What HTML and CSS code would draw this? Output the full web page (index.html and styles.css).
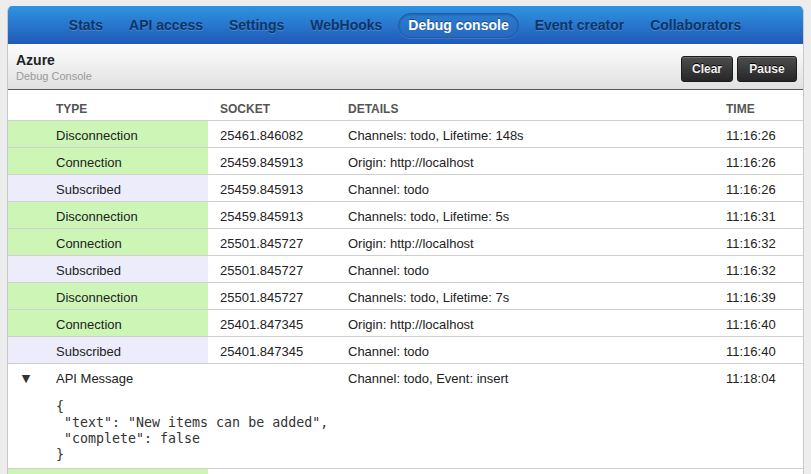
FILE: index.html
```html
<!DOCTYPE html>
<html lang="en">
<head>
<meta charset="utf-8">
<title>Debug console</title>
<link rel="stylesheet" href="styles.css">
</head>
<body>
<div class="panel">
  <nav class="nav">
    <a class="nav-item">Stats</a>
    <a class="nav-item">API access</a>
    <a class="nav-item">Settings</a>
    <a class="nav-item">WebHooks</a>
    <a class="nav-item active">Debug console</a>
    <a class="nav-item">Event creator</a>
    <a class="nav-item">Collaborators</a>
  </nav>
  <header class="head">
    <div class="title">
      <div class="app-name">Azure</div>
      <div class="subtitle">Debug Console</div>
    </div>
    <div class="actions">
      <button class="btn btn-clear">Clear</button>
      <button class="btn btn-pause">Pause</button>
    </div>
  </header>
  <div class="table">
    <div class="row thead">
      <div class="cell arrow"></div>
      <div class="cell">Type</div>
      <div class="cell">Socket</div>
      <div class="cell">Details</div>
      <div class="cell">Time</div>
    </div>
    <div class="row conn">
      <div class="cell arrow"></div><div class="cell type">Disconnection</div>
      <div class="cell">25461.846082</div><div class="cell">Channels: todo, Lifetime: 148s</div><div class="cell">11:16:26</div>
    </div>
    <div class="row conn">
      <div class="cell arrow"></div><div class="cell type">Connection</div>
      <div class="cell">25459.845913</div><div class="cell">Origin: http://localhost</div><div class="cell">11:16:26</div>
    </div>
    <div class="row sub">
      <div class="cell arrow"></div><div class="cell type">Subscribed</div>
      <div class="cell">25459.845913</div><div class="cell">Channel: todo</div><div class="cell">11:16:26</div>
    </div>
    <div class="row conn">
      <div class="cell arrow"></div><div class="cell type">Disconnection</div>
      <div class="cell">25459.845913</div><div class="cell">Channels: todo, Lifetime: 5s</div><div class="cell">11:16:31</div>
    </div>
    <div class="row conn">
      <div class="cell arrow"></div><div class="cell type">Connection</div>
      <div class="cell">25501.845727</div><div class="cell">Origin: http://localhost</div><div class="cell">11:16:32</div>
    </div>
    <div class="row sub">
      <div class="cell arrow"></div><div class="cell type">Subscribed</div>
      <div class="cell">25501.845727</div><div class="cell">Channel: todo</div><div class="cell">11:16:32</div>
    </div>
    <div class="row conn">
      <div class="cell arrow"></div><div class="cell type">Disconnection</div>
      <div class="cell">25501.845727</div><div class="cell">Channels: todo, Lifetime: 7s</div><div class="cell">11:16:39</div>
    </div>
    <div class="row conn">
      <div class="cell arrow"></div><div class="cell type">Connection</div>
      <div class="cell">25401.847345</div><div class="cell">Origin: http://localhost</div><div class="cell">11:16:40</div>
    </div>
    <div class="row sub">
      <div class="cell arrow"></div><div class="cell type">Subscribed</div>
      <div class="cell">25401.847345</div><div class="cell">Channel: todo</div><div class="cell">11:16:40</div>
    </div>
    <div class="row msg">
      <div class="cell arrow">&#9660;</div><div class="cell type">API Message</div>
      <div class="cell"></div><div class="cell">Channel: todo, Event: insert</div><div class="cell">11:18:04</div>
      <pre class="payload">{
 "text": "New items can be added",
 "complete": false
}</pre>
    </div>
    <div class="row conn">
      <div class="cell arrow"></div><div class="cell type"></div>
      <div class="cell"></div><div class="cell"></div><div class="cell"></div>
    </div>
  </div>
</div>
</body>
</html>
```
FILE: styles.css
```css
html, body {
  margin: 0;
  padding: 0;
  overflow: hidden;
}
body {
  background: #ededed;
  font-family: "Liberation Sans", Arial, sans-serif;
  color: #222;
}
.panel {
  margin: 6px 0 0 7px;
  width: 797px;
  box-sizing: border-box;
  border-left: 1px solid #c9c9c9;
  border-right: 1px solid #c9c9c9;
  border-radius: 5px 5px 0 0;
  background: #fff;
  overflow: hidden;
}
.nav {
  height: 38px;
  display: flex;
  align-items: center;
  justify-content: center;
  gap: 6px;
  background: linear-gradient(#2f94e2, #2059b8);
  margin: 0 -1px;
  padding-right: 1px;
}
.nav-item {
  height: 25px;
  line-height: 25px;
  padding: 0 10px;
  border-radius: 13px;
  font-size: 14px;
  font-weight: bold;
  color: #0d3565;
  text-shadow: 0 1px 0 rgba(255,255,255,0.18);
  box-sizing: border-box;
}
.nav-item.active {
  color: #fff;
  background: linear-gradient(#2a7ccf, #2669c0);
  border: 1px solid #1e5ba8;
  line-height: 23px;
  padding: 0 9px;
  box-shadow: inset 0 1px 2px rgba(0,0,0,0.2), 0 1px 0 rgba(255,255,255,0.12);
  text-shadow: 0 -1px 0 rgba(0,0,0,0.35);
}
.head {
  height: 45px;
  display: flex;
  align-items: center;
  justify-content: space-between;
  padding: 0 6px 0 8px;
  background: linear-gradient(#fcfcfc, #e1e1e1);
  border-bottom: 1px solid #555;
}
.title {
  padding-top: 2px;
}
.app-name {
  font-size: 14px;
  font-weight: bold;
  line-height: 17px;
  color: #222;
}
.subtitle {
  font-size: 11px;
  line-height: 14px;
  color: #9a9a9a;
}
.actions {
  display: flex;
  gap: 4px;
  margin-top: 5px;
}
.btn {
  height: 26px;
  padding: 0;
  border: 1px solid #1b1b1b;
  border-radius: 3px;
  background: linear-gradient(#4d4d4d, #262626);
  box-shadow: inset 0 1px 0 rgba(255,255,255,0.18);
  color: #f2f2f2;
  font-family: "Liberation Sans", Arial, sans-serif;
  font-size: 12px;
  font-weight: bold;
  text-shadow: 0 -1px 0 #000;
}
.btn-clear { width: 52px; }
.btn-pause { width: 60px; }

.table {
  font-size: 13px;
  color: #222;
}
.row {
  display: grid;
  grid-template-columns: 36px 164px 128px 378px 1fr;
  border-bottom: 1px solid #cfcfcf;
}
.cell {
  height: 26px;
  line-height: 30px;
  padding-left: 12px;
  white-space: nowrap;
}
.cell.arrow {
  padding-left: 0;
  text-align: center;
  font-family: "DejaVu Sans", sans-serif;
  font-size: 11px;
  color: #333;
}
.thead .cell {
  height: 30px;
  line-height: 14px;
  font-size: 12px;
  font-weight: bold;
  text-transform: uppercase;
  color: #555;
  display: flex;
  align-items: flex-end;
  box-sizing: border-box;
  padding-bottom: 4px;
}
.conn .arrow, .conn .type { background: #cdf5b6; }
.sub .arrow, .sub .type { background: #ececfb; }
.payload {
  grid-column: 2 / -1;
  margin: 0;
  padding: 9px 0 5px 12px;
  font-family: "DejaVu Sans Mono", monospace;
  font-size: 13.3px;
  line-height: 16px;
  color: #333;
}
```
